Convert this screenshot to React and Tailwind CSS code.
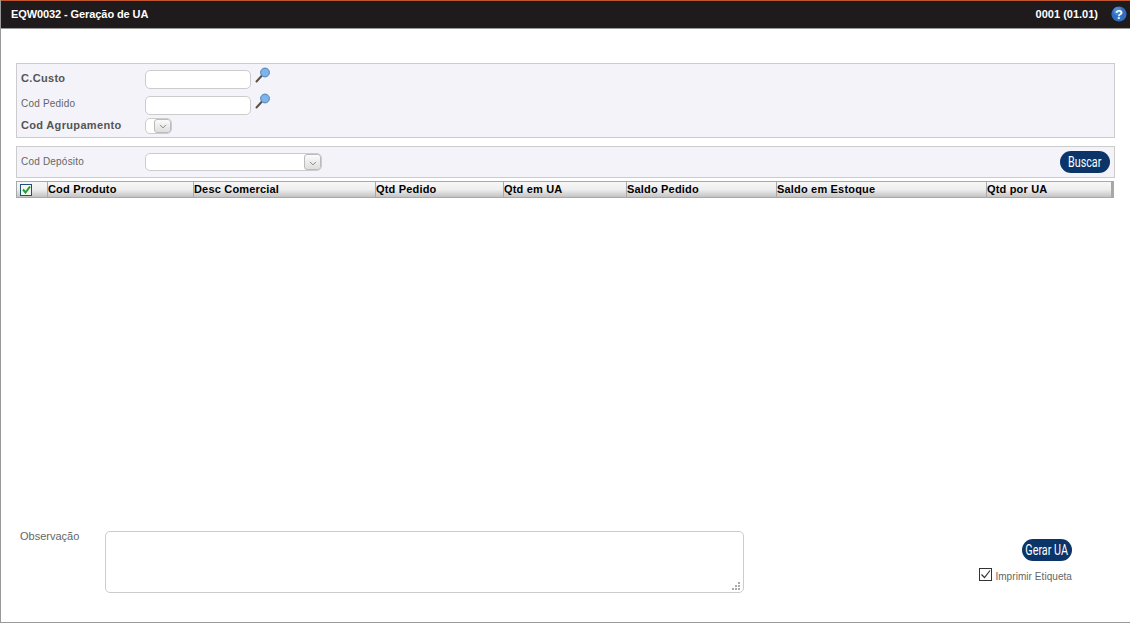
import { ChevronDown } from 'lucide-react'

const columns = [
  { label: 'Cod Produto', width: 'w-[146px]' },
  { label: 'Desc Comercial', width: 'w-[182px]' },
  { label: 'Qtd Pedido', width: 'w-[128px]' },
  { label: 'Qtd em UA', width: 'w-[123px]' },
  { label: 'Saldo Pedido', width: 'w-[150px]' },
  { label: 'Saldo em Estoque', width: 'w-[210px]' },
  { label: 'Qtd por UA', width: 'flex-1' },
]

function Lupa() {
  return (
    <svg width="16" height="16" viewBox="0 0 16 16" className="shrink-0">
      <line x1="1.5" y1="14.5" x2="6.5" y2="9" stroke="#5a5148" strokeWidth="2" strokeLinecap="round" />
      <circle cx="10" cy="5.5" r="4.4" fill="#7db4ee" stroke="#4d7fb0" strokeWidth="1" />
    </svg>
  )
}

function SelectArrow() {
  return (
    <div className="w-[17px] h-full shrink-0 bg-gradient-to-b from-[#fbfbfb] to-[#dedede] border border-[#bbb] rounded-[3px] flex items-end justify-center">
      <ChevronDown className="w-[12px] h-[11px] text-[#555]" strokeWidth={1.4} />
    </div>
  )
}

function TextInput() {
  return <input className="block w-[106px] h-[19px] bg-white border border-[#ccc] rounded-[5px]" />
}

function PillButton({ children }) {
  return (
    <button className="flex items-center justify-center w-[50px] h-[22px] bg-[#0b3569] rounded-full text-white font-['Roboto',sans-serif] text-[14px] leading-none whitespace-nowrap">
      <span className="shrink-0 inline-block scale-x-[0.77]">{children}</span>
    </button>
  )
}

export default function App() {
  return (
    <div className="h-[623px] flex flex-col bg-white border-l border-b border-[#999] font-['Liberation_Sans',Arial,sans-serif] overflow-hidden">
      {/* Header */}
      <div className="h-[29px] shrink-0 -ml-px flex items-center justify-between bg-[#1f1b1c] border-t border-t-[#c0562c] border-b border-b-[#999] pl-[11px] pr-[3px] text-white text-[11px] font-bold">
        <span className="tracking-[-0.09px]">EQW0032 - Geração de UA</span>
        <div className="flex items-center gap-[13px]">
          <span>0001 (01.01)</span>
          <svg width="16" height="16" viewBox="0 0 16 16" className="-mt-px">
            <circle cx="8" cy="8" r="7.6" fill="#2f6fc0" />
            <circle cx="6.5" cy="5" r="4" fill="#6ea2e0" opacity="0.5" />
            <text x="8" y="12.5" textAnchor="middle" fontSize="13" fontWeight="700" fill="#fff" fontFamily="Liberation Sans">?</text>
          </svg>
        </div>
      </div>

      {/* Filtros */}
      <div className="mt-[34px] ml-[15px] mr-[15px] h-[75px] shrink-0 bg-[#f3f3f9] border border-[#ccc] pl-[4px] flex flex-col">
        <div className="h-[29px] flex items-start">
          <label className="w-[124px] pt-[8px] text-[11px] leading-[13px] font-bold text-[#555] tracking-[0.32px]">C.Custo</label>
          <div className="flex items-start gap-[4px] pt-[3px]">
            <div className="pt-[3px]"><TextInput /></div>
            <Lupa />
          </div>
        </div>
        <div className="h-[25px] flex items-start">
          <label className="w-[124px] pt-[5px] text-[10px] leading-[12px] text-[#666] tracking-[0.2px]">Cod Pedido</label>
          <div className="flex items-start gap-[4px]">
            <div className="pt-[3px]"><TextInput /></div>
            <Lupa />
          </div>
        </div>
        <div className="flex items-start">
          <label className="w-[124px] text-[11px] leading-[14px] font-bold text-[#555] tracking-[0.33px]">Cod Agrupamento</label>
          <div className="w-[27px] h-[16px] bg-white border border-[#ccc] rounded-[5px] flex justify-end overflow-hidden">
            <SelectArrow />
          </div>
        </div>
      </div>

      {/* Deposito */}
      <div className="mt-[8px] ml-[15px] mr-[15px] h-[32px] shrink-0 bg-[#f3f3f9] border border-[#ccc] pl-[4px] pr-[4px] flex items-center">
        <label className="w-[124px] -mt-[2px] text-[10px] text-[#666] tracking-[0.2px]">Cod Depósito</label>
        <div className="w-[177px] h-[18px] -mt-[1px] bg-white border border-[#ccc] rounded-[5px] flex justify-end overflow-hidden">
          <SelectArrow />
        </div>
        <div className="ml-auto"><PillButton>Buscar</PillButton></div>
      </div>

      {/* Grid */}
      <div className="mt-[3px] ml-[15px] mr-[16px] h-[17px] shrink-0 flex bg-gradient-to-b from-[#f7f7f7] via-[#eeeeee] to-[#c4c4c4] border-t border-b border-l border-r-[3px] border-[#a8a8a8] text-[11px] font-bold text-black leading-[15px] tracking-[0.18px]">
        <div className="w-[31px] border-r border-[#aaa] flex items-center pl-[3px]">
          <div className="w-[12px] h-[12px] bg-[#f2f7f2] border border-[#1f4f7a] flex items-center justify-center">
            <svg width="9" height="9" viewBox="0 0 9 9">
              <path d="M1 4.5 L3.5 7.5 L8 1.5" fill="none" stroke="#22a02c" strokeWidth="2" />
            </svg>
          </div>
        </div>
        {columns.map((col) => (
          <div key={col.label} className={`${col.width} border-r border-[#aaa] last:border-r-0`}>
            {col.label}
          </div>
        ))}
      </div>

      <div className="flex-1" />

      {/* Rodape */}
      <div className="h-[91px] shrink-0 flex pl-[19px]">
        <label className="w-[85px] text-[11px] text-[#666] leading-[11px]">Observação</label>
        <div className="relative w-[639px] h-[62px]">
          <textarea className="block w-full h-full bg-white border border-[#ccc] rounded-[5px] resize-none" />
          {/* grip do textarea */}
          <svg width="8" height="8" viewBox="0 0 8 8" className="absolute right-[4px] bottom-[3px]">
            <path d="M6 0h2v2h-2zM3 3h2v2h-2zM6 3h2v2h-2zM0 6h2v2h-2zM3 6h2v2h-2zM6 6h2v2h-2z" fill="#aaa" />
          </svg>
        </div>
        <div className="ml-[228px] w-[150px] flex flex-col items-end pr-[50px] pt-[8px]">
          <PillButton>Gerar UA</PillButton>
          <div className="mt-[7px] flex items-start gap-[3px]">
            <div className="w-[13px] h-[13px] border border-[#333] bg-white flex items-center justify-center">
              <svg width="11" height="11" viewBox="0 0 11 11">
                <path d="M1.5 5.5 L4.5 8.5 L10 1.5" fill="none" stroke="#333" strokeWidth="1.2" />
              </svg>
            </div>
            <span className="pt-[3px] text-[10px] leading-[11px] text-[#666] tracking-[0.06px]">Imprimir Etiqueta</span>
          </div>
        </div>
      </div>
    </div>
  )
}
